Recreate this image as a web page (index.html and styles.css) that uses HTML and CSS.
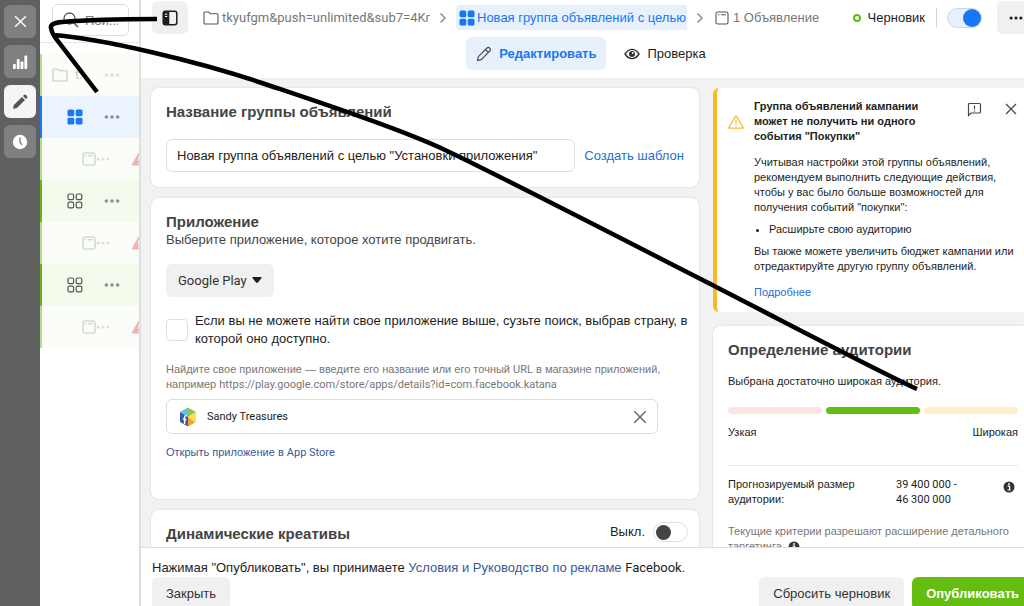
FILE: index.html
```html
<!DOCTYPE html>
<html lang="ru">
<head>
  <meta charset="UTF-8">
  <meta name="viewport" content="width=device-width, initial-scale=1.0">
  <title>Новая группа объявлений</title>
  <link rel="stylesheet" href="styles.css">
</head>
<body>

<!-- shared icons -->
<svg class="sprite" width="0" height="0">
  <symbol id="i-close" viewBox="0 0 14 14"><path d="M2 2l10 10M12 2L2 12" fill="none" stroke="currentColor" stroke-width="1.3"/></symbol>
  <symbol id="i-folder" viewBox="0 0 16 14"><path d="M1 3.2V2q0-1 1-1h3.2q.7 0 1.2.6l.9 1.2H14q1 0 1 1V12q0 1-1 1H2q-1 0-1-1z" fill="none" stroke="currentColor" stroke-width="1.1"/></symbol>
  <symbol id="i-grid" viewBox="0 0 16 16"><g fill="none" stroke="currentColor" stroke-width="1.2"><rect x="1" y="1" width="5.6" height="5.6" rx="1.4"/><rect x="9.2" y="1" width="5.6" height="5.6" rx="1.4"/><rect x="1" y="9.2" width="5.6" height="5.6" rx="1.4"/><rect x="9.2" y="9.2" width="5.6" height="5.6" rx="1.4"/></g></symbol>
  <symbol id="i-grid-fill" viewBox="0 0 16 16"><g fill="currentColor"><rect x=".5" y=".5" width="6.8" height="6.8" rx="1.6"/><rect x="8.7" y=".5" width="6.8" height="6.8" rx="1.6"/><rect x=".5" y="8.7" width="6.8" height="6.8" rx="1.6"/><rect x="8.7" y="8.7" width="6.8" height="6.8" rx="1.6"/></g></symbol>
  <symbol id="i-ad" viewBox="0 0 14 14"><rect x="1" y="1" width="12" height="12" rx="1.8" fill="none" stroke="currentColor" stroke-width="1.1"/><path d="M3 3.8h1.4M5.8 3.8H11" stroke="currentColor" stroke-width="1.1"/></symbol>
  <symbol id="i-dots" viewBox="0 0 16 4"><g fill="currentColor"><circle cx="2.4" cy="2" r="1.8"/><circle cx="8" cy="2" r="1.8"/><circle cx="13.6" cy="2" r="1.8"/></g></symbol>
  <symbol id="i-warn" viewBox="0 0 16 14"><path d="M8 .8q.6 0 .9.6l6.4 11q.5 1.2-.9 1.2H1.6q-1.400 0-.9-1.200l6.400-11Q7.400.8 8 .8z" fill="currentColor"/><path d="M8 4.500v4.500M8 10.200v1.600" stroke="#fff" stroke-width="1.500"/></symbol>
  <symbol id="i-chevron" viewBox="0 0 8 12"><path d="M1.500 1.500L6 6l-4.500 4.500" fill="none" stroke="currentColor" stroke-width="1.500"/></symbol>
  <symbol id="i-info" viewBox="0 0 12 12"><circle cx="6" cy="6" r="5.500" fill="currentColor"/><path d="M4.600 5.200h2v3.600M4.500 9h3.200" fill="none" stroke="#fff" stroke-width="1.200"/><circle cx="6" cy="3" r=".9" fill="#fff"/></symbol>
</svg>

<div class="app">

  <nav class="rail">
    <button class="rail-btn" aria-label="Закрыть панель"><svg width="15" height="15"><use href="#i-close"/></svg></button>
    <button class="rail-btn" aria-label="Графики"><svg width="16" height="16" viewBox="0 0 16 16"><g fill="#fff"><rect x="1" y="10" width="2.800" height="5" rx=".8"/><rect x="4.800" y="5" width="2.800" height="10" rx=".8"/><rect x="8.600" y="7.500" width="2.800" height="7.500" rx=".8"/><rect x="12.400" y="1.500" width="2.800" height="13.500" rx=".8"/></g></svg></button>
    <button class="rail-btn active" aria-label="Редактор"><svg width="16" height="16" viewBox="0 0 16 16"><path d="M1 15l.9-3.900L10 3l3 3-8.100 8.100zM11 2l1-1q1-.8 2 0l1 1q.8 1 0 2l-1 1z" fill="currentColor"/></svg></button>
    <button class="rail-btn" aria-label="История"><svg width="16" height="16" viewBox="0 0 16 16"><circle cx="8" cy="8" r="7.200" fill="#fff"/><path d="M8 3.500V8l2 3" fill="none" stroke="#777" stroke-width="1.300"/></svg></button>
  </nav>

  <aside class="tree">
    <div class="search-wrap">
      <label class="search">
        <svg width="16" height="16" viewBox="0 0 16 16"><circle cx="6.500" cy="6.500" r="5.500" fill="none" stroke="#555" stroke-width="1.300"/><path d="M10.500 10.500L15 15" stroke="#555" stroke-width="1.500"/></svg>
        <input type="text" placeholder="Пои..." aria-label="Поиск">
      </label>
    </div>
    <div class="row faded level-0"><svg width="16" height="14"><use href="#i-folder"/></svg><span class="row-name latin">t.</span><svg class="dots" width="16" height="4"><use href="#i-dots"/></svg></div>
    <div class="row selected level-1"><svg width="16" height="16"><use href="#i-grid-fill"/></svg><svg class="dots" width="16" height="4"><use href="#i-dots"/></svg></div>
    <div class="row faded level-2"><svg width="14" height="14"><use href="#i-ad"/></svg><svg class="dots" width="14" height="4"><use href="#i-dots"/></svg><svg class="warn" width="16" height="14"><use href="#i-warn"/></svg></div>
    <div class="row group level-1"><svg width="16" height="16"><use href="#i-grid"/></svg><svg class="dots" width="16" height="4"><use href="#i-dots"/></svg></div>
    <div class="row faded level-2"><svg width="14" height="14"><use href="#i-ad"/></svg><svg class="dots" width="14" height="4"><use href="#i-dots"/></svg><svg class="warn" width="16" height="14"><use href="#i-warn"/></svg></div>
    <div class="row group level-1"><svg width="16" height="16"><use href="#i-grid"/></svg><svg class="dots" width="16" height="4"><use href="#i-dots"/></svg></div>
    <div class="row faded level-2"><svg width="14" height="14"><use href="#i-ad"/></svg><svg class="dots" width="14" height="4"><use href="#i-dots"/></svg><svg class="warn" width="16" height="14"><use href="#i-warn"/></svg></div>
  </aside>

  <main class="main">
    <header class="header">
      <div class="crumbs">
        <button class="panel-btn" aria-label="Показать панель"><svg width="16" height="16" viewBox="0 0 16 16"><rect x="1.200" y="1.200" width="13.600" height="13.600" rx="2.200" fill="none" stroke="#1c1e21" stroke-width="1.500"/><path d="M1.500 2h5.800v12.500H1.500z" fill="#1c1e21"/><path d="M3 4.200h2.300M3 6.500h2.300" stroke="#fff" stroke-width="1"/></svg></button>
        <a class="crumb campaign" href="#"><svg width="16" height="14"><use href="#i-folder"/></svg><span class="latin">tkyufgm&amp;push=unlimited&amp;sub7=4Km</span></a>
        <svg class="chevron" width="8" height="12"><use href="#i-chevron"/></svg>
        <a class="crumb current" href="#"><svg width="16" height="16"><use href="#i-grid-fill"/></svg><span>Новая группа объявлений с целью</span></a>
        <svg class="chevron" width="8" height="12"><use href="#i-chevron"/></svg>
        <a class="crumb ads" href="#"><svg width="14" height="14"><use href="#i-ad"/></svg><span>1 Объявление</span></a>
        <div class="status">
          <span class="status-dot"></span>
          <span class="status-text">Черновик</span>
          <span class="separator"></span>
          <input type="checkbox" class="toggle" aria-label="Группа включена" checked>
          <button class="more-btn" aria-label="Ещё"><svg width="14" height="4"><use href="#i-dots"/></svg></button>
        </div>
      </div>
      <div class="tabs">
        <button class="tab active"><svg width="16" height="16" viewBox="0 0 16 16"><path d="M1.500 14.500l.8-3.800 8.700-8.700q1.300-1.200 2.700.2t.2 2.700l-8.700 8.700zM9.500 3.700l2.800 2.800" fill="none" stroke="#444950" stroke-width="1.200"/></svg>Редактировать</button>
        <button class="tab"><svg width="16" height="12" viewBox="0 0 16 12"><path d="M1 6q3-4.600 7-4.600T15 6q-3 4.600-7 4.600T1 6z" fill="none" stroke="#333" stroke-width="1.400"/><circle cx="8" cy="6" r="3" fill="#333"/><circle cx="8.800" cy="5" r=".9" fill="#fff"/></svg>Проверка</button>
      </div>
    </header>

    <div class="content">
      <div class="form">
        <section class="card">
          <h2><label for="groupName">Название группы объявлений</label></h2>
          <div class="name-row">
            <input type="text" id="groupName" class="text-input" value="Новая группа объявлений с целью &quot;Установки приложения&quot;">
            <a class="template-link" href="#">Создать шаблон</a>
          </div>
        </section>

        <section class="card app-card">
          <h2>Приложение</h2>
          <p class="subtitle">Выберите приложение, которое хотите продвигать.</p>
          <div class="store">
            <select class="latin" aria-label="Магазин приложений">
              <option>Google Play</option>
            </select>
            <svg width="10" height="6" viewBox="0 0 10 6"><path d="M.3.800Q.200 0 1 0h8q.8 0 .7.800L6 5.400q-1 .9-2 0z" fill="#1c1e21"/></svg>
          </div>
          <label class="country">
            <input type="checkbox">
            <span>Если вы не можете найти свое приложение выше, сузьте поиск, выбрав страну, в которой оно доступно.</span>
          </label>
          <p class="hint">Найдите свое приложение — введите его название или его точный <span class="latin">URL</span> в магазине приложений, например <span class="latin">https://play.google.com/store/apps/details?id=com.facebook.katana</span></p>
          <div class="app-box">
            <svg width="18" height="20" viewBox="0 0 18 20">
              <path d="M9 .5L1 5l8 5z" fill="#59c3e8"/><path d="M9 .5L17 5l-8 5z" fill="#8cc751"/>
              <path d="M1 5l8 5v9.500L1 15z" fill="#3a5a9b"/><path d="M17 5v10l-4 2-4-7z" fill="#ffdf4a"/><path d="M9 10v9.500l7-4z" fill="#f5a13a"/>
              <path d="M7.600 8.800q-2-.5-2 1.700v6.500M3.900 11.600l3.300 1.400" fill="none" stroke="#fff" stroke-width="1.500"/>
            </svg>
            <input type="text" class="latin" value="Sandy Treasures" aria-label="Приложение">
            <button aria-label="Очистить"><svg width="16" height="16"><use href="#i-close"/></svg></button>
          </div>
          <a class="store-link" href="#">Открыть приложение в <span class="latin">App Store</span></a>
        </section>

        <section class="card creative-card">
          <h2>Динамические креативы</h2>
          <label class="creative-switch">Выкл. <input type="checkbox" class="toggle"></label>
        </section>
      </div>

      <aside class="side">
        <section class="alert">
          <svg class="alert-icon" width="16" height="14" viewBox="0 0 16 14"><path d="M8 1q.4 0 .7.500l6.300 10.700q.4 1-.6 1H1.600q-1 0-.6-1L7.300 1.500Q7.600 1 8 1zM8 4.500v4.300M8 10v1.500" fill="none" stroke="#f7b928" stroke-width="1.300"/></svg>
          <div class="alert-body">
            <h3>Группа объявлений кампании может не получить ни одного события "Покупки"</h3>
            <p>Учитывая настройки этой группы объявлений, рекомендуем выполнить следующие действия, чтобы у вас было больше возможностей для получения событий "покупки":</p>
            <ul>
              <li>Расширьте свою аудиторию</li>
            </ul>
            <p>Вы также можете увеличить бюджет кампании или отредактируйте другую группу объявлений.</p>
            <a href="#">Подробнее</a>
          </div>
          <div class="alert-actions">
            <button aria-label="Отзыв"><svg width="15" height="15" viewBox="0 0 15 15"><path d="M1.500 13.500V2.500q0-1 1-1h10q1 0 1 1v7.500q0 1-1 1H4zM7.500 3.500v3.700M7.500 8.200v1.300" fill="none" stroke="#444950" stroke-width="1.200"/></svg></button>
            <button aria-label="Скрыть"><svg width="14" height="14"><use href="#i-close"/></svg></button>
          </div>
        </section>

        <section class="audience">
          <h2>Определение аудитории</h2>
          <p>Выбрана достаточно широкая аудитория.</p>
          <div class="meter"><span class="narrow"></span><span class="good"></span><span class="broad"></span></div>
          <div class="meter-labels"><span>Узкая</span><span>Широкая</span></div>
          <div class="estimate">
            <span class="estimate-name">Прогнозируемый размер аудитории:</span>
            <span class="estimate-value latin">39 400 000 - 46 300 000</span>
            <svg width="12" height="12"><use href="#i-info"/></svg>
          </div>
          <p class="note">Текущие критерии разрешают расширение детального таргетинга. <svg width="12" height="12"><use href="#i-info"/></svg></p>
        </section>
      </aside>
    </div>

    <footer class="footer">
      <p>Нажимая "Опубликовать", вы принимаете <a href="#">Условия и Руководство по рекламе</a> <span class="latin">Facebook.</span></p>
      <div class="actions">
        <button class="btn">Закрыть</button>
        <button class="btn discard">Сбросить черновик</button>
        <button class="btn publish">Опубликовать</button>
      </div>
    </footer>
  </main>
</div>

<!-- hand-drawn arrow over the page -->
<svg class="arrow" width="1024" height="606" viewBox="0 0 1024 606">
  <path d="M157 19C120 19 85 20 62 22Q50 23 51 28Q52 34 57 40L97 92M53 35C100 38 200 62 262 83S400 129 445 150S640 248 720 289S880 372 917 389" fill="none" stroke="#000" stroke-width="4.500"/>
</svg>

</body>
</html>
```
FILE: styles.css
```css
* {
  box-sizing: border-box;
}
body {
  margin: 0;
  font-family: "Liberation Sans", Arial, sans-serif;
  font-size: 13px;
  line-height: 16px;
  color: #1c1e21;
  background: #fff;
  overflow: hidden;
}
h2, h3, p, ul {
  margin: 0;
}
h2 {
  font-size: 15px;
  line-height: 20px;
  color: #444;
}
a {
  color: #385898;
  text-decoration: none;
}
button, input, select {
  font-family: inherit;
  font-size: 13px;
  color: inherit;
  border: none;
  background: none;
  margin: 0;
  padding: 0;
}
svg {
  flex: none;
}
.latin {
  font-family: Roboto, "Liberation Sans", sans-serif;
}
.sprite {
  position: absolute;
}
.app {
  display: flex;
  height: 100vh;
}

/* left rail */
.rail {
  flex: none;
  width: 40px;
  padding: 5px 4px;
  display: flex;
  flex-direction: column;
  gap: 7px;
  background: #606060;
}
.rail-btn {
  display: flex;
  align-items: center;
  justify-content: center;
  height: 33px;
  border-radius: 6px;
  background: #808080;
  color: #fff;
}
.rail-btn.active {
  background: #f5f5f5;
  color: #555;
}

/* campaign tree */
.tree {
  flex: none;
  width: 101px;
  overflow: hidden;
  border-right: 2px solid #dddfe2;
}
.search-wrap {
  height: 43px;
  margin-bottom: 11px;
  padding: 4px 10px 0 12px;
  border-bottom: 1px solid #e4e6e8;
}
.search {
  display: flex;
  align-items: center;
  gap: 6px;
  height: 32px;
  padding: 0 10px;
  border: 1px solid #dddfe2;
  border-radius: 6px;
}
.search input {
  width: 100%;
  min-width: 0;
}
.search input::placeholder {
  color: #777;
}
.row {
  position: relative;
  display: flex;
  align-items: center;
  height: 42px;
  border-left: 2px solid #64b80f;
  color: #555;
  white-space: nowrap;
}
.level-0 {
  padding-left: 10px;
}
.level-1 {
  padding-left: 25px;
}
.level-2 {
  padding-left: 40px;
}
.row-name {
  margin-left: 7px;
}
.row .dots {
  position: absolute;
  left: 62px;
  color: #8a8f9a;
}
.row.level-2 .dots {
  left: 54px;
}
.row.faded {
  background: #fbfef8;
  border-color: #b5dd90;
  color: #c4c7c4;
}
.row.faded .dots {
  color: #dcdee0;
}
.row.group {
  background: #f4faec;
}
.row.selected {
  background: #ebf4fe;
  border-color: #1877f2;
  color: #1877f2;
}
.row.selected .dots {
  color: #8a8f9a;
}
.row .warn {
  position: absolute;
  left: 89px;
  color: #f0b3b3;
}

/* header */
.main {
  flex: 1;
  min-width: 0;
  display: flex;
  flex-direction: column;
}
.header {
  flex: none;
  height: 78px;
  padding: 1px 0 0 11px;
}
.crumbs {
  display: flex;
  align-items: center;
  height: 33px;
  white-space: nowrap;
}
.panel-btn, .more-btn {
  display: flex;
  align-items: center;
  justify-content: center;
  width: 36px;
  height: 33px;
  border-radius: 6px;
  background: #f0f0f0;
}
.crumb {
  display: flex;
  align-items: center;
  gap: 3px;
  color: #777;
}
.crumb svg {
  color: #555;
}
.campaign {
  width: 227px;
  margin-left: 15px;
  overflow: hidden;
}
.chevron {
  margin: 0 9px;
  color: #8a8f99;
}
.current {
  gap: 2px;
  height: 25px;
  padding: 0 1px 0 3px;
  border-radius: 4px 0 0 4px;
  background: #e7f1fd;
}
.current, .current svg {
  color: #1877f2;
}
.ads {
  gap: 4px;
  margin-left: 2px;
}
.status {
  display: flex;
  align-items: center;
  margin-left: auto;
}
.status-dot {
  width: 8px;
  height: 8px;
  margin-right: 7px;
  border: 2px solid #64b80f;
  border-radius: 50%;
}
.separator {
  width: 1px;
  height: 20px;
  margin: 0 10px 0 11px;
  background: #d5d8dc;
}
.toggle {
  appearance: none;
  flex: none;
  display: flex;
  align-items: center;
  width: 35px;
  height: 20px;
  padding: 0 2px;
  border: 1px solid #dddfe2;
  border-radius: 10px;
  background: #fff;
}
.toggle::before {
  content: "";
  width: 15px;
  height: 15px;
  border-radius: 50%;
  background: #444;
}
.toggle:checked {
  justify-content: flex-end;
  padding: 0;
  border-color: #ccd8ea;
  background: #e7f1fd;
}
.toggle:checked::before {
  width: 18px;
  height: 18px;
  background: #1877f2;
}
.more-btn {
  width: 27px;
  margin-left: 15px;
  padding-left: 10px;
  border-radius: 6px 0 0 6px;
}
.tabs {
  display: flex;
  justify-content: center;
  gap: 8px;
  margin-top: 3px;
  padding-left: 6px;
}
.tab {
  display: flex;
  align-items: center;
  gap: 7px;
  height: 33px;
  padding: 0 10px;
  border-radius: 6px;
}
.tab.active {
  background: #e7f1fd;
  color: #1877f2;
  font-weight: bold;
}

/* content */
.content {
  flex: 1;
  min-height: 0;
  overflow: hidden;
  display: flex;
  gap: 14px;
  padding: 10px 0 0 10px;
  background: #f1f3f3;
}
.form {
  flex: 1;
  min-width: 0;
}
.card {
  margin-bottom: 11px;
  padding: 14px 15px 15px;
  border-radius: 8px;
  background: #fff;
  box-shadow: 0 0 2px rgba(0, 0, 0, 0.15);
}
.name-row {
  display: flex;
  align-items: center;
  gap: 9px;
  margin-top: 17px;
}
.text-input {
  flex: 1;
  min-width: 0;
  height: 33px;
  padding: 0 10px;
  border: 1px solid #dddfe2;
  border-radius: 6px;
}
.template-link {
  color: #216fdb;
}
.app-card {
  padding-bottom: 38px;
}
.subtitle {
  color: #444;
}
.store {
  position: relative;
  width: 108px;
  margin-top: 16px;
}
.store select {
  appearance: none;
  display: block;
  width: 100%;
  height: 33px;
  padding: 0 12px;
  border-radius: 6px;
  background: #f0f0f0;
  color: #333;
}
.store svg {
  position: absolute;
  right: 12px;
  top: 13px;
}
.country {
  display: flex;
  align-items: center;
  gap: 7px;
  margin: 15px -10px 0 0;
  line-height: 18px;
}
.country input {
  appearance: none;
  flex: none;
  width: 22px;
  height: 22px;
  border: 1px solid #dddfe2;
  border-radius: 4px;
}
.hint {
  margin-top: 14px;
  font-size: 11px;
  line-height: 15px;
  color: #777;
}
.app-box {
  display: flex;
  align-items: center;
  width: 95%;
  height: 35px;
  margin: 7px 0 10px;
  padding: 0 9px 0 12px;
  border: 1px solid #dddfe2;
  border-radius: 6px;
}
.app-box input {
  flex: 1;
  margin-left: 10px;
  font-size: 11px;
}
.app-box button {
  display: flex;
  color: #606770;
}
.store-link {
  display: block;
  font-size: 11px;
}
.creative-card {
  display: flex;
  justify-content: space-between;
  padding-right: 11px;
}
.creative-switch {
  display: flex;
  align-items: center;
  gap: 8px;
  height: 16px;
}

/* right column */
.side {
  flex: none;
  width: 311px;
  font-size: 11px;
  line-height: 15px;
}
.alert {
  display: flex;
  margin-bottom: 14px;
  padding: 11px 6px 12px 11px;
  border-left: 4px solid #f7b928;
  border-radius: 6px 0 0 6px;
  background: #fff;
}
.alert-icon {
  margin-top: 16px;
}
.alert-body {
  flex: 1;
  margin-left: 10px;
  margin-right: -54px;
}
.alert h3 {
  width: 180px;
  margin-bottom: 11px;
  font-size: 11px;
}
.alert ul {
  margin: 7px 0;
  padding-left: 15px;
}
.alert a {
  display: block;
  margin-top: 11px;
  color: #216fdb;
}
.alert-actions {
  display: flex;
  align-items: flex-start;
  gap: 22px;
  margin-top: 3px;
}
.alert-actions button {
  display: flex;
  color: #444950;
}
.audience {
  padding: 14px 6px 14px 15px;
  border-radius: 8px 0 0 8px;
  background: #fff;
  box-shadow: 0 0 2px rgba(0, 0, 0, 0.15);
}
.audience h2 {
  margin-bottom: 14px;
}
.meter {
  display: flex;
  gap: 4px;
  margin: 18px 0 11px;
}
.meter span {
  flex: 1;
  height: 7px;
  border-radius: 4px;
}
.narrow {
  background: #fce6e3;
}
.good {
  background: #64bd10;
}
.broad {
  background: #fff0cc;
}
.meter-labels {
  display: flex;
  justify-content: space-between;
}
.estimate {
  display: flex;
  align-items: flex-start;
  margin-top: 25px;
  padding-top: 11px;
  border-top: 1px solid #e9ebee;
}
.estimate-name {
  width: 168px;
  padding-right: 30px;
}
.estimate-value {
  width: 70px;
}
.estimate svg {
  margin: 4px 3px 0 auto;
}
.audience svg {
  color: #333;
}
.note {
  margin-top: 17px;
  color: #777;
}
.note svg {
  vertical-align: middle;
}

/* footer */
.footer {
  flex: none;
  height: 59px;
  overflow: hidden;
  padding: 12px 0 0 11px;
  border-top: 1px solid #dddfe2;
  background: #fff;
}
.actions {
  display: flex;
  gap: 8px;
  margin-top: 1px;
}
.btn {
  height: 33px;
  padding: 0 14px;
  border-radius: 6px;
  background: #f0f0f0;
  color: #333;
}
.discard {
  margin-left: auto;
}
.publish {
  padding-right: 5px;
  border-radius: 6px 0 0 6px;
  background: #64bd10;
  color: #fff;
  font-weight: bold;
}

.arrow {
  position: absolute;
  left: 0;
  top: 0;
  pointer-events: none;
}
```
